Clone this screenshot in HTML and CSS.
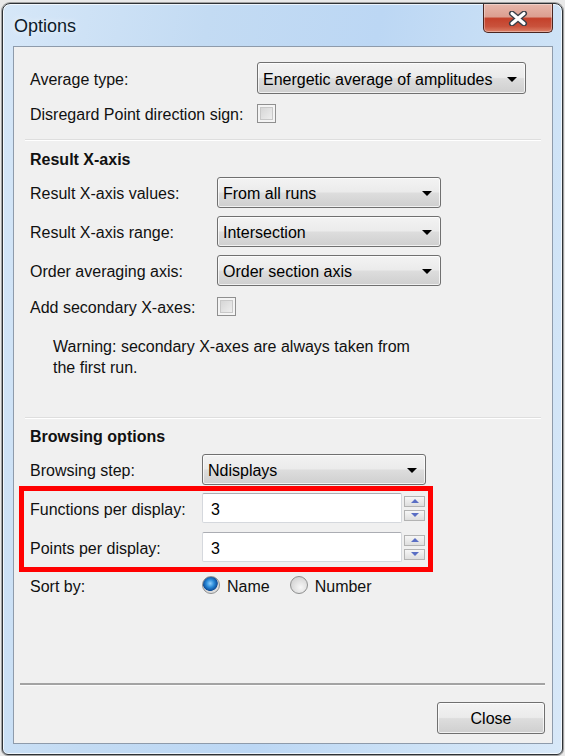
FILE: index.html
```html
<!DOCTYPE html>
<html>
<head>
<meta charset="utf-8">
<title>Options</title>
<link rel="stylesheet" href="styles.css">
</head>
<body>
<div class="window">
  <div class="titlebar">
    <div class="title">Options</div>
    <div class="closebtn">
      <svg width="20" height="15" viewBox="0 0 20 15"><path d="M4,2.5 L16,12.5 M16,2.5 L4,12.5" stroke="#3b3f48" stroke-width="6" stroke-linecap="round"/><path d="M4,2.5 L16,12.5 M16,2.5 L4,12.5" stroke="#ffffff" stroke-width="3.2" stroke-linecap="round"/></svg>
    </div>
  </div>
  <div class="content">
    <div class="sec sec-a">
      <div class="row r-a1">
        <div class="lbl">Average type:</div>
        <div class="combo w-a"><span>Energetic average of amplitudes</span><i class="arrow"></i></div>
      </div>
      <div class="row r-a2">
        <div class="lbl">Disregard Point direction sign:</div>
        <div class="check"></div>
      </div>
    </div>
    <div class="sep sep1"></div>
    <div class="sec sec-b">
      <div class="heading">Result X-axis</div>
      <div class="row r-sel">
        <div class="lbl">Result X-axis values:</div>
        <div class="combo w-b"><span>From all runs</span><i class="arrow"></i></div>
      </div>
      <div class="row r-sel">
        <div class="lbl">Result X-axis range:</div>
        <div class="combo w-b"><span>Intersection</span><i class="arrow"></i></div>
      </div>
      <div class="row r-sel">
        <div class="lbl">Order averaging axis:</div>
        <div class="combo w-b"><span>Order section axis</span><i class="arrow"></i></div>
      </div>
      <div class="row r-chk">
        <div class="lbl">Add secondary X-axes:</div>
        <div class="check"></div>
      </div>
      <div class="warning">Warning: secondary X-axes are always taken from<br>the first run.</div>
    </div>
    <div class="sep sep2"></div>
    <div class="sec sec-c">
      <div class="heading">Browsing options</div>
      <div class="row r-step">
        <div class="lbl">Browsing step:</div>
        <div class="combo w-c"><span>Ndisplays</span><i class="arrow"></i></div>
      </div>
    </div>
    <div class="highlight">
      <div class="row r-num">
        <div class="lbl">Functions per display:</div>
        <div class="numinput">3</div>
        <div class="spin"><div class="sbtn"><i class="up"></i></div><div class="sbtn"><i class="down"></i></div></div>
      </div>
      <div class="row r-num r-num2">
        <div class="lbl">Points per display:</div>
        <div class="numinput">3</div>
        <div class="spin"><div class="sbtn"><i class="up"></i></div><div class="sbtn"><i class="down"></i></div></div>
      </div>
    </div>
    <div class="sec sec-c">
      <div class="row r-sort">
        <div class="lbl">Sort by:</div>
        <div class="radio on"></div><span class="rtext">Name</span>
        <div class="radio r2"></div><span class="rtext">Number</span>
      </div>
    </div>
    <div class="footer">
      <div class="fsep"></div>
      <div class="btnrow"><div class="button">Close</div></div>
    </div>
  </div>
</div>
</body>
</html>
```
FILE: styles.css
```css
html, body {
  margin: 0;
  padding: 0;
}
body {
  width: 565px;
  height: 756px;
  background: #e9e9e9;
  font-family: "Liberation Sans", Arial, sans-serif;
  font-size: 16px;
  color: #111111;
  overflow: hidden;
}
.window {
  box-sizing: border-box;
  margin: 3px 2px 0 2px;
  width: 561px;
  height: 752px;
  border: 1px solid #2e3236;
  border-radius: 8px 8px 6px 6px;
  padding: 0 9px 10px 10px;
  background: linear-gradient(100deg, #d6e7f8 0%, #c3dbf3 30%, #bcd7f4 55%, #cde2f6 80%, #d8e8f8 100%);
  box-shadow: inset 0 0 0 1px rgba(255,255,255,0.7), 0 0 0 1px rgba(90,90,90,0.5);
  display: flex;
  flex-direction: column;
}
.titlebar {
  height: 42px;
  display: flex;
  justify-content: space-between;
  align-items: flex-start;
  flex: none;
}
.title {
  font-size: 18px;
  color: #0d1a2a;
  padding: 12px 0 0 1px;
  text-shadow: 0 0 6px rgba(255,255,255,0.9);
}
.closebtn {
  width: 70px;
  height: 29px;
  box-sizing: border-box;
  border: 1px solid #4a2520;
  border-top: none;
  border-radius: 0 0 5px 5px;
  background: linear-gradient(#e7b7ab 0%, #dc9f91 45%, #c4412b 52%, #c9523c 80%, #dc8067 100%);
  box-shadow: inset 0 0 0 1px rgba(255,255,255,0.35);
  display: flex;
  align-items: center;
  justify-content: center;
}
.content {
  flex: 1;
  box-sizing: border-box;
  border: 1px solid #8e9bab;
  background: #f0f0f0;
  display: flex;
  flex-direction: column;
  padding-top: 15px;
}
.sec {
  padding-left: 16px;
}
.row {
  display: flex;
  align-items: center;
}
.lbl {
  flex: none;
  white-space: nowrap;
  padding-top: 3px;
}
.combo span, .rtext {
  padding-top: 3px;
}
.sec-a .lbl { width: 227px; }
.sec-b .lbl { width: 187px; }
.sec-c .lbl, .highlight .lbl { width: 172px; }
.r-a1 { height: 32px; }
.r-a2 { height: 19px; margin-top: 10px; }
.heading {
  font-weight: bold;
  height: 20px;
  line-height: 22px;
}
.sec-b .heading { margin-top: 8px; }
.sec-c .heading { margin-top: 7px; }
.r-sel { height: 31px; margin-top: 8px; }
.r-chk { height: 19px; margin-top: 11px; }
.warning {
  margin-top: 20px;
  padding-left: 23px;
  line-height: 21px;
  height: 42px;
}
.r-step { height: 31px; margin-top: 8px; }
.sep {
  margin: 0 11px;
  height: 1px;
  border-top: 1px solid #dedede;
  background: #ffffff;
}
.sep1 { margin-top: 16px; }
.sep2 { margin-top: 39px; }
.combo {
  box-sizing: border-box;
  height: 100%;
  border: 1px solid #707070;
  border-radius: 3px;
  background: linear-gradient(#f3f3f3 0%, #ebebeb 48%, #dddddd 52%, #cfcfcf 100%);
  box-shadow: inset 0 0 0 1px rgba(255,255,255,0.7);
  display: flex;
  align-items: center;
  justify-content: space-between;
  padding: 0 8px 0 5px;
  color: #000;
}
.w-a { width: 269px; }
.w-b { width: 224px; }
.w-c { width: 224px; }
.arrow {
  width: 0;
  height: 0;
  border-left: 5px solid transparent;
  border-right: 5px solid transparent;
  border-top: 5px solid #000;
  margin-top: 2px;
}
.check {
  box-sizing: border-box;
  width: 19px;
  height: 19px;
  border: 1px solid #8f8f8f;
  background: linear-gradient(135deg, #d0d0d0 0%, #f4f4f4 100%);
  box-shadow: inset 0 0 0 2px #f4f4f4, inset 0 0 0 3px #c8c8c8;
}
.highlight {
  box-sizing: border-box;
  margin: 1px 0 0 5px;
  width: 414px;
  height: 86px;
  border: 5px solid #ff0000;
  padding: 2px 3px 0 6px;
}
.r-num { height: 30px; }
.r-num2 { margin-top: 9px; }
.numinput {
  box-sizing: border-box;
  width: 200px;
  height: 30px;
  background: #fff;
  border: 1px solid #d5d8dd;
  border-top-color: #abadb3;
  border-radius: 2px;
  padding: 2px 0 0 8px;
  line-height: 28px;
  color: #000;
}
.spin {
  margin-left: 2px;
  height: 30px;
  display: flex;
  flex-direction: column;
  justify-content: center;
  gap: 3px;
}
.sbtn {
  box-sizing: border-box;
  width: 21px;
  height: 11px;
  border: 1px solid #b3b3b3;
  background: linear-gradient(#f6f6f6, #dedede);
  display: flex;
  align-items: center;
  justify-content: center;
}
.up {
  width: 0; height: 0;
  border-left: 4px solid transparent;
  border-right: 4px solid transparent;
  border-bottom: 4px solid #5a6ec4;
}
.down {
  width: 0; height: 0;
  border-left: 4px solid transparent;
  border-right: 4px solid transparent;
  border-top: 4px solid #5a6ec4;
}
.r-sort { height: 18px; margin-top: 4px; }
.radio {
  box-sizing: border-box;
  width: 18px;
  height: 18px;
  border-radius: 50%;
  border: 1px solid #8e8f8f;
  background: radial-gradient(circle at 60% 65%, #f7f7f7 0%, #d6d6d6 70%);
  flex: none;
}
.radio.on {
  background: radial-gradient(circle at 45% 40%, #8fd0ff 0%, #2a8ad8 30%, #0e4e9a 55%, #d9d9d9 60%, #eeeeee 100%);
}
.rtext { margin-left: 7px; }
.radio.r2 { margin-left: 20px; }
.footer {
  margin-top: auto;
  padding: 0 7px 9px 6px;
}
.fsep {
  height: 2px;
  background: #a3a3a3;
  border-bottom: 1px solid #fbfbfb;
}
.btnrow {
  display: flex;
  justify-content: flex-end;
  margin-top: 16px;
}
.button {
  box-sizing: border-box;
  width: 108px;
  height: 32px;
  border: 1px solid #707070;
  border-radius: 3px;
  background: linear-gradient(#f3f3f3 0%, #ebebeb 48%, #dddddd 52%, #cfcfcf 100%);
  box-shadow: inset 0 0 0 1px rgba(255,255,255,0.7);
  display: flex;
  align-items: center;
  justify-content: center;
  padding-top: 2px;
  color: #000;
}
```
